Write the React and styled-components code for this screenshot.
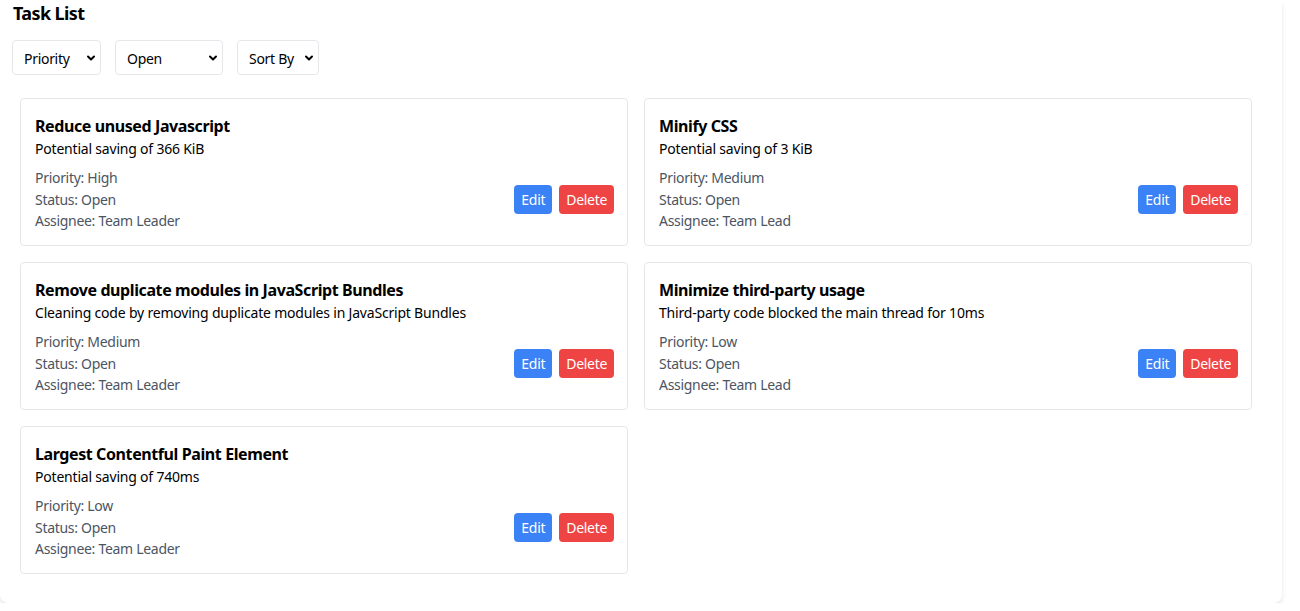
import React from 'react'
import styled, { createGlobalStyle } from 'styled-components'
import { ChevronDown } from 'lucide-react'

const GlobalStyle = createGlobalStyle`
  body {
    margin: 0;
    background: #fff;
    font-family: "Noto Sans", "Open Sans", sans-serif;
    color: #000;
  }
`

const Container = styled.div`
  width: 1282px;
  box-sizing: border-box;
  padding: 0 12px 29px 12px;
  background: #fff;
  border-radius: 0 0 8px 8px;
  box-shadow: 0 4px 6px -1px rgba(0, 0, 0, 0.1), 0 2px 4px -2px rgba(0, 0, 0, 0.1);
`

const Heading = styled.h1`
  margin: 0;
  padding: 1px 0 0 1px;
  font-size: 18px;
  line-height: 24px;
  font-weight: 700;
  letter-spacing: -0.6px;
`

const Filters = styled.div`
  display: flex;
  gap: 14px;
  margin-top: 15px;
`

const SelectWrap = styled.div`
  position: relative;
  width: ${p => p.$w}px;
`

const Select = styled.select`
  appearance: none;
  width: 100%;
  height: 35px;
  box-sizing: border-box;
  padding: 1px 18px 0 11px;
  border: 1px solid #e5e7eb;
  border-radius: 4px;
  background: #fff;
  font-family: inherit;
  font-size: 14px;
  letter-spacing: -0.3px;
  color: #000;
  outline: none;
`

const Arrow = styled(ChevronDown)`
  position: absolute;
  right: 4px;
  top: 12px;
  pointer-events: none;
`

const Grid = styled.div`
  display: grid;
  grid-template-columns: repeat(2, 608px);
  gap: 16px;
  margin: 23px 0 0 8px;
`

const Card = styled.div`
  border: 1px solid #e5e7eb;
  border-radius: 4px;
  padding: 14px 13px 13.5px 14px;
  background: #fff;
`

const Title = styled.h2`
  margin: 0;
  font-size: 16px;
  line-height: 26px;
  font-weight: 700;
  letter-spacing: -0.4px;
`

const Desc = styled.p`
  margin: 0;
  font-size: 14px;
  line-height: 20px;
  letter-spacing: -0.2px;
`

const Row = styled.div`
  display: flex;
  justify-content: space-between;
  align-items: center;
  margin-top: 8px;
`

const Meta = styled.div`
  display: flex;
  flex-direction: column;
  font-size: 14px;
  line-height: 21.5px;
  letter-spacing: -0.3px;
  color: #4b5563;
`

const Actions = styled.div`
  display: flex;
  gap: 7px;
`

const Button = styled.button`
  border: none;
  border-radius: 4px;
  padding: 4px 7px;
  font-family: inherit;
  font-size: 14px;
  line-height: 21px;
  letter-spacing: -0.3px;
  color: #fff;
  background: ${p => (p.$danger ? '#ef4444' : '#3b82f6')};
  cursor: pointer;
`

const tasks = [
  { title: 'Reduce unused Javascript', desc: 'Potential saving of 366 KiB', priority: 'High', assignee: 'Team Leader' },
  { title: 'Minify CSS', desc: 'Potential saving of 3 KiB', priority: 'Medium', assignee: 'Team Lead' },
  { title: 'Remove duplicate modules in JavaScript Bundles', desc: 'Cleaning code by removing duplicate modules in JavaScript Bundles', priority: 'Medium', assignee: 'Team Leader' },
  { title: 'Minimize third-party usage', desc: 'Third-party code blocked the main thread for 10ms', priority: 'Low', assignee: 'Team Lead' },
  { title: 'Largest Contentful Paint Element', desc: 'Potential saving of 740ms', priority: 'Low', assignee: 'Team Leader' },
]

function Dropdown({ w, options }) {
  return (
    <SelectWrap $w={w}>
      <Select defaultValue={options[0]}>
        {options.map(o => <option key={o}>{o}</option>)}
      </Select>
      <Arrow size={12} strokeWidth={4} color="#000" />
    </SelectWrap>
  )
}

export default function App() {
  return (
    <>
      <GlobalStyle />
      <Container>
        <Heading>Task List</Heading>
        <Filters>
          <Dropdown w={89} options={['Priority', 'High', 'Medium', 'Low']} />
          <Dropdown w={108} options={['Open', 'In Progress', 'Closed']} />
          <Dropdown w={82} options={['Sort By', 'Priority', 'Status']} />
        </Filters>
        <Grid>
          {tasks.map(t => (
            <Card key={t.title}>
              <Title>{t.title}</Title>
              <Desc>{t.desc}</Desc>
              <Row>
                <Meta>
                  <span>Priority: {t.priority}</span>
                  <span>Status: Open</span>
                  <span>Assignee: {t.assignee}</span>
                </Meta>
                <Actions>
                  <Button>Edit</Button>
                  <Button $danger>Delete</Button>
                </Actions>
              </Row>
            </Card>
          ))}
        </Grid>
      </Container>
    </>
  )
}
